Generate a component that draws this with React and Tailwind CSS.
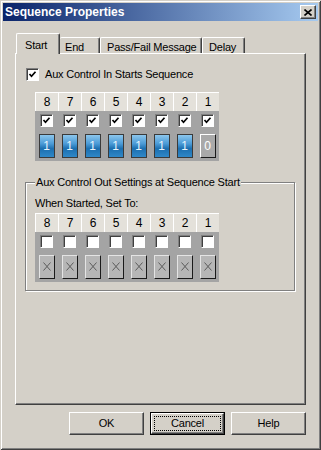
import React from "react";

const cols = [8, 7, 6, 5, 4, 3, 2, 1];

const Check = ({ checked }) => (
  <div className="w-[13px] h-[13px] bg-white border border-[#808080] border-r-white border-b-white shadow-[inset_1px_1px_0_#404040] flex items-center justify-center">
    {checked && (
      <svg width="9" height="9" viewBox="0 0 9 9">
        <path d="M1.5 4 L3.5 6.2 L7.5 1.8" fill="none" stroke="#000" strokeWidth="1.7" />
      </svg>
    )}
  </div>
);

const OnButton = () => (
  <div className="w-[16px] h-[24px] border border-[#3a3a3a] bg-[linear-gradient(180deg,#8cc6ec,#4a9ad6_40%,#1c6fb0_62%,#2f88c8)] flex items-center justify-center text-[12px] text-[#e8f4fc]">
    1
  </div>
);

const OffButton = () => (
  <div className="w-[16px] h-[24px] border border-white border-r-[#1a1a1a] border-b-[#1a1a1a] bg-[#a9a9a9] flex items-center justify-center text-[12px] text-white">
    0
  </div>
);

const XButton = () => (
  <div className="w-[16px] h-[24px] border border-[#e4e4e4] border-r-[#1a1a1a] border-b-[#1a1a1a] bg-[#b6b6b6] flex items-center justify-center">
    <svg width="8" height="9" viewBox="0 0 8 9">
      <path d="M0.5 0.5 L7.5 8.5 M7.5 0.5 L0.5 8.5" stroke="#5c5c5c" strokeWidth="1" fill="none" />
    </svg>
  </div>
);

const Grid = ({ checks, cell }) => (
  <div className="w-[184px]">
    <div className="flex">
      {cols.map((c) => (
        <div
          key={c}
          className="w-[23px] h-[19px] bg-[#e4e1da] border-l border-t border-white flex items-center justify-center text-[12px] text-black"
        >
          {c}
        </div>
      ))}
    </div>
    <div className="flex h-[50px] bg-[#a4a4a4]">
      {cols.map((c, i) => (
        <div key={c} className="w-[23px] flex flex-col items-center pt-[3px] gap-[7px]">
          <Check checked={checks} />
          {cell(i)}
        </div>
      ))}
    </div>
  </div>
);

const Button = ({ children, focused }) =>
  focused ? (
    <div className="w-[75px] h-[23px] border border-black">
      <div className="w-full h-full bg-[#d4d0c8] border border-white border-r-[#404040] border-b-[#404040] shadow-[inset_-1px_-1px_0_#808080] p-[2px]">
        <div className="w-full h-full border border-dotted border-black flex items-center justify-center">
          {children}
        </div>
      </div>
    </div>
  ) : (
    <div className="w-[75px] h-[23px] bg-[#d4d0c8] border border-white border-r-[#404040] border-b-[#404040] shadow-[inset_-1px_-1px_0_#808080] flex items-center justify-center">
      {children}
    </div>
  );

export default function App() {
  return (
    <div className="w-[321px] h-[450px] bg-[#d4d0c8] p-[3px] flex flex-col font-['Liberation_Sans',Arial,sans-serif] text-[11px] tracking-[-0.2px] text-black shadow-[inset_1px_1px_0_#d4d0c8,inset_-1px_-1px_0_#404040,inset_2px_2px_0_#fff,inset_-2px_-2px_0_#808080]">
      {/* Title bar */}
      <div className="h-[18px] flex items-center justify-between pl-[2px] pr-[2px] bg-[linear-gradient(90deg,#0a246a,#a6caf0)]">
        <span className="text-white font-bold text-[12px] tracking-normal">Sequence Properties</span>
        <div className="w-[16px] h-[14px] bg-[#d4d0c8] border border-white border-r-[#404040] border-b-[#404040] shadow-[inset_-1px_-1px_0_#808080] flex items-center justify-center">
          <svg width="8" height="7" viewBox="0 0 8 7">
            <path d="M0.5 0.5 L7.5 6.5 M7.5 0.5 L0.5 6.5" stroke="#000" strokeWidth="1.6" fill="none" />
          </svg>
        </div>
      </div>

      {/* Tabs */}
      <div className="mt-[12px] pl-[13px] flex items-end h-[20px]">
        <div className="relative z-10 w-[44px] h-[21px] -mb-[1px] bg-[#d4d0c8] border-l border-t border-white border-r border-r-[#404040] shadow-[inset_-1px_0_0_#808080] rounded-t-[2px] pl-[8px] pt-[3px]">
          Start
        </div>
        <div className="w-[40px] h-[16px] border-t border-white border-r border-r-[#404040] shadow-[inset_-1px_0_0_#808080] rounded-t-[2px] pl-[5px] pt-[1px]">
          End
        </div>
        <div className="w-[102px] h-[16px] border-l border-t border-white border-r border-r-[#404040] shadow-[inset_-1px_0_0_#808080] rounded-t-[2px] pl-[6px] pt-[1px]">
          Pass/Fail Message
        </div>
        <div className="w-[43px] h-[16px] border-l border-t border-white border-r border-r-[#404040] shadow-[inset_-1px_0_0_#808080] rounded-t-[2px] pl-[6px] pt-[1px]">
          Delay
        </div>
      </div>

      {/* Panel */}
      <div className="ml-[12px] w-[291px] h-[352px] border border-white border-r-[#404040] border-b-[#404040] shadow-[inset_-1px_-1px_0_#808080] flex flex-col">
        <div className="mt-[12px] ml-[10px] flex items-center gap-[6px]">
          <Check checked />
          <span>Aux Control In Starts Sequence</span>
        </div>

        <div className="mt-[9px] ml-[19px]">
          <Grid checks cell={(i) => (i === 7 ? <OffButton /> : <OnButton />)} />
        </div>

        <div className="relative mt-[21px] ml-[9px] w-[270px] h-[109px] border border-[#808080] shadow-[inset_1px_1px_0_#fff,1px_1px_0_#fff] pt-[14px] pl-[9px]">
          <span className="absolute -top-[7px] left-[9px] px-[1px] bg-[#d4d0c8] leading-[13px]">
            Aux Control Out Settings at Sequence Start
          </span>
          <div className="leading-[13px]">When Started, Set To:</div>
          <div className="mt-[3px]">
            <Grid checks={false} cell={() => <XButton />} />
          </div>
        </div>
      </div>

      {/* Buttons */}
      <div className="mt-[7px] pr-[12px] flex justify-end gap-[6px]">
        <Button>OK</Button>
        <Button focused>Cancel</Button>
        <Button>Help</Button>
      </div>
    </div>
  );
}
